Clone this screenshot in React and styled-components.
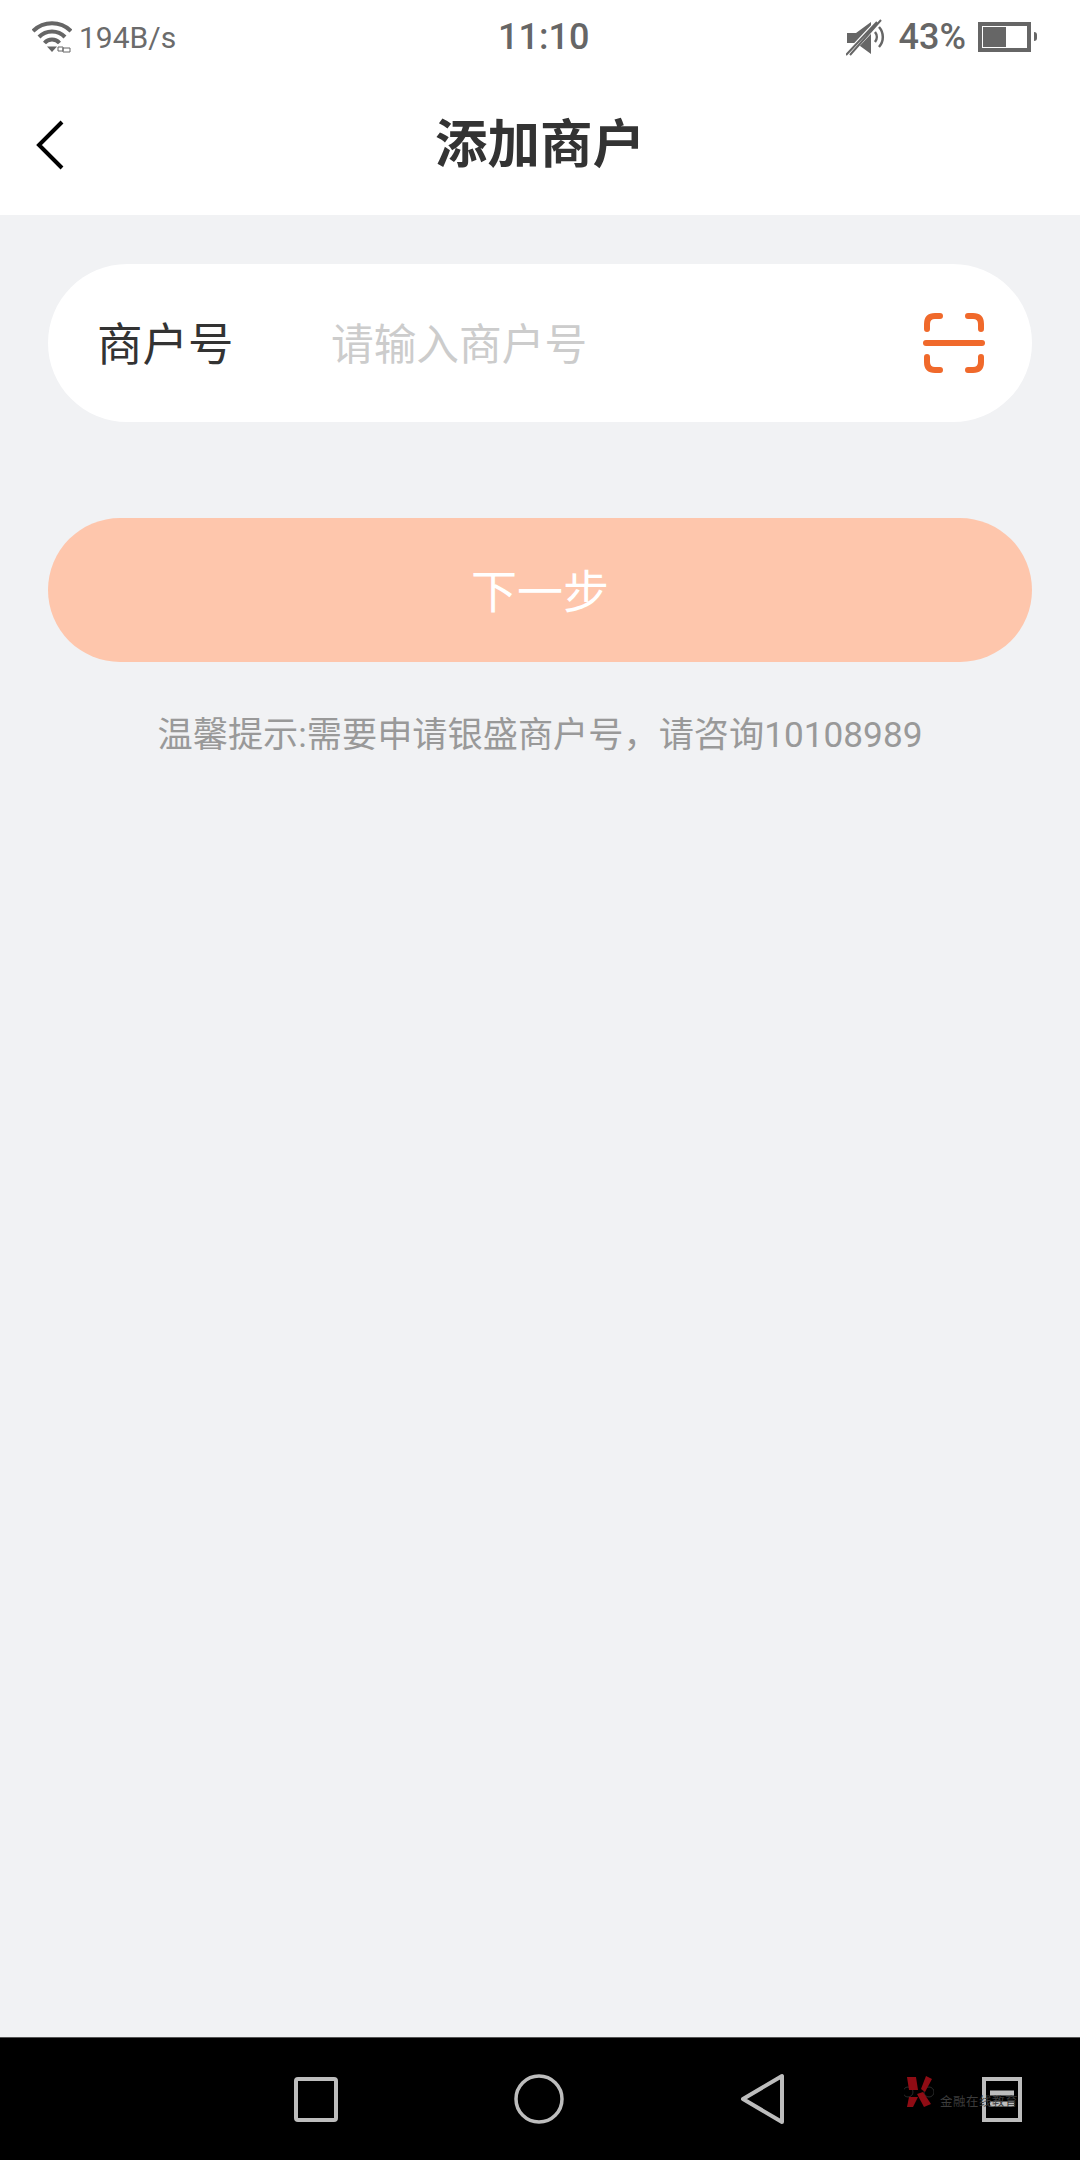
import React from "react";
import styled, { createGlobalStyle } from "styled-components";

const Global = createGlobalStyle`
  html, body { margin: 0; padding: 0; background: #f1f2f4; }
  * { box-sizing: border-box; }
`;
const CJK = `"Noto Sans CJK SC", Roboto, sans-serif`;
const LATIN = `Roboto, "Noto Sans CJK SC", sans-serif`;

const Page = styled.div`
  width: 1080px; height: 2160px; display: flex; flex-direction: column;
  background: #f1f2f4; overflow: hidden;
`;
const Header = styled.header`background: #fff; height: 215px; flex: none;`;
const StatusBar = styled.div`
  height: 74px; display: flex; align-items: center; padding: 0 42px 0 32px;
  color: #666; font-family: ${LATIN};
`;
const StatusLeft = styled.div`flex: 0 0 466px; display: flex; align-items: center; gap: 7px;`;
const Speed = styled.span`font-size: 30px; color: #6b6b6b;`;
const Time = styled.span`font-size: 36px; font-weight: 500;`;
const StatusRight = styled.div`margin-left: auto; display: flex; align-items: center;`;
const Percent = styled.span`font-size: 36px; font-weight: 500; margin: 0 12px 0 13px;`;
const Battery = styled.div`
  position: relative; width: 53px; height: 30px; border: 4px solid #666; padding: 1px;
  margin-right: 7px;
  &::after {
    content: ""; position: absolute; right: -10px; top: 6px; width: 3px; height: 9px; background: #666;
    border-radius: 0 3px 3px 0;
  }
`;
const BatteryLevel = styled.div`height: 100%; background: #666;`;
const TitleBar = styled.div`
  height: 141px; padding: 1px 0 0 36px; position: relative; display: flex; align-items: center;
`;
const Title = styled.h1`
  position: absolute; left: 0; right: 0; top: 0; bottom: 10px; margin: 0;
  display: flex; align-items: center; justify-content: center;
  font: 700 52.5px ${CJK}; color: #333;
`;
const Main = styled.main`flex: 1; padding: 49px 48px 0;`;
const InputCard = styled.div`
  height: 158px; border-radius: 79px; background: #fff; display: flex; align-items: center;
  padding: 0 47px 0 49px;
`;
const Label = styled.span`
  font: 400 45.5px ${CJK}; color: #333; width: 234px; flex: none; white-space: nowrap; padding-bottom: 5px;
`;
const Placeholder = styled.span`
  font: 400 42.7px ${CJK}; color: #ccc; flex: 1; white-space: nowrap; padding-bottom: 5px;
`;
const NextButton = styled.div`
  margin-top: 96px; height: 144px; border-radius: 72px; background: #fec6ac;
  display: flex; align-items: center; justify-content: center; padding-bottom: 5px;
  font: 400 46px ${CJK}; color: #fff;
`;
const Hint = styled.p`
  margin: 50px 0 0; text-align: center; font: 400 35.2px/46px ${LATIN}; color: #999; white-space: nowrap;
`;
const NavBar = styled.nav`
  height: 123px; flex: none; background: #000; border-top: 1px solid #555;
  display: flex; align-items: center; padding: 0 0 0 294px; position: relative;
`;
const NavIcon = styled.svg`flex: none; margin-right: ${(p) => p.$gap}px; overflow: visible;`;
const Watermark = styled.div`
  position: absolute; left: 904px; top: 37px; width: 120px; height: 40px;
`;
const WatermarkText = styled.span`
  position: absolute; left: 36px; top: 16px; font: 400 12.5px ${CJK}; letter-spacing: 0.5px;
  color: #3c3c3c; white-space: nowrap;
`;

export default function App() {
  return (
    <Page>
      <Global />
      <Header>
        <StatusBar>
          <StatusLeft>
            <svg width="40" height="32" viewBox="0 0 40 32">
              <g fill="none" stroke="#666" strokeWidth="4">
                <path d="M1 10 A27 27 0 0 1 39 10" />
                <path d="M7 16 A18 18 0 0 1 33 16" />
                <path d="M12.5 22 A10 10 0 0 1 27.5 22" />
              </g>
              <path d="M15 25.5 H25 L20 31 Z" fill="#666" />
              <path d="M26 26 h5 v4 h-5 z M31 27 h7 v4 h-7 z" fill="none" stroke="#666" strokeWidth="1" />
            </svg>
            <Speed>194B/s</Speed>
          </StatusLeft>
          <Time>11:10</Time>
          <StatusRight>
            <svg width="40" height="37" viewBox="0 0 40 37">
              <path d="M1 14 H10 L25 3 V35 L10 24 H1 Z" fill="#666" />
              <path d="M1 36 L34 1" stroke="#fff" strokeWidth="6" />
              <path d="M0 36 L31 3 M4 36 L35 1" stroke="#666" strokeWidth="2" />
              <path d="M29 13 A8 8 0 0 1 29 23" fill="none" stroke="#666" strokeWidth="2.5" />
              <path d="M33 8 A15 15 0 0 1 33 28" fill="none" stroke="#666" strokeWidth="2.5" />
            </svg>
            <Percent>43%</Percent>
            <Battery>
              <BatteryLevel style={{ width: "53%" }} />
            </Battery>
          </StatusRight>
        </StatusBar>
        <TitleBar>
          <svg width="28" height="50" viewBox="0 0 28 50">
            <path d="M26 2 L3 25 L26 48" fill="none" stroke="#000" strokeWidth="4" />
          </svg>
          <Title>添加商户</Title>
        </TitleBar>
      </Header>
      <Main>
        <InputCard>
          <Label>商户号</Label>
          <Placeholder>请输入商户号</Placeholder>
          <svg width="62" height="62" viewBox="0 0 62 62">
            <g fill="none" stroke="#f0692b" strokeWidth="6" strokeLinecap="round">
              <path d="M4 17 V12 Q4 4 12 4 H17" />
              <path d="M45 4 H50 Q58 4 58 12 V17" />
              <path d="M4 45 V50 Q4 58 12 58 H17" />
              <path d="M45 58 H50 Q58 58 58 50 V45" />
              <path d="M3 31 H59" />
            </g>
          </svg>
        </InputCard>
        <NextButton>下一步</NextButton>
        <Hint>温馨提示:需要申请银盛商户号，请咨询10108989</Hint>
      </Main>
      <NavBar>
        <NavIcon $gap={176} width="44" height="45" viewBox="0 0 44 45">
          <rect x="2" y="2" width="40" height="41" rx="2" fill="none" stroke="#bdbdbd" strokeWidth="4" />
        </NavIcon>
        <NavIcon $gap={177} width="50" height="50" viewBox="0 0 50 50">
          <circle cx="25" cy="25" r="23" fill="none" stroke="#bdbdbd" strokeWidth="3.5" />
        </NavIcon>
        <NavIcon $gap={197} width="44" height="50" viewBox="0 0 44 50">
          <path d="M41 2 V48 L2 25 Z" fill="none" stroke="#bdbdbd" strokeWidth="4" strokeLinejoin="round" />
        </NavIcon>
        <NavIcon $gap={0} width="40" height="45" viewBox="0 0 40 45">
          <rect x="2" y="2" width="36" height="41" fill="none" stroke="#bdbdbd" strokeWidth="4" />
          <path d="M8 16 H32 M8 27 H32" stroke="#bdbdbd" strokeWidth="5" />
        </NavIcon>
        <Watermark>
          <svg width="30" height="34" viewBox="0 0 30 34">
            <circle cx="4" cy="17" r="5" fill="none" stroke="#2a2a2a" strokeWidth="1" />
            <circle cx="25" cy="17" r="5" fill="none" stroke="#2a2a2a" strokeWidth="1" />
            <g fill="#8f0c14">
              <path d="M3 2 H12 L14 15 H5 Z" />
              <path d="M17 14 L22 1 L28 4 L21 17 Z" />
              <path d="M5 22 H14 L9 32 H3 Z" />
              <path d="M13 19 L19 17 L27 29 L20 32 Z" />
            </g>
          </svg>
          <WatermarkText>金融在线教育</WatermarkText>
        </Watermark>
      </NavBar>
    </Page>
  );
}
